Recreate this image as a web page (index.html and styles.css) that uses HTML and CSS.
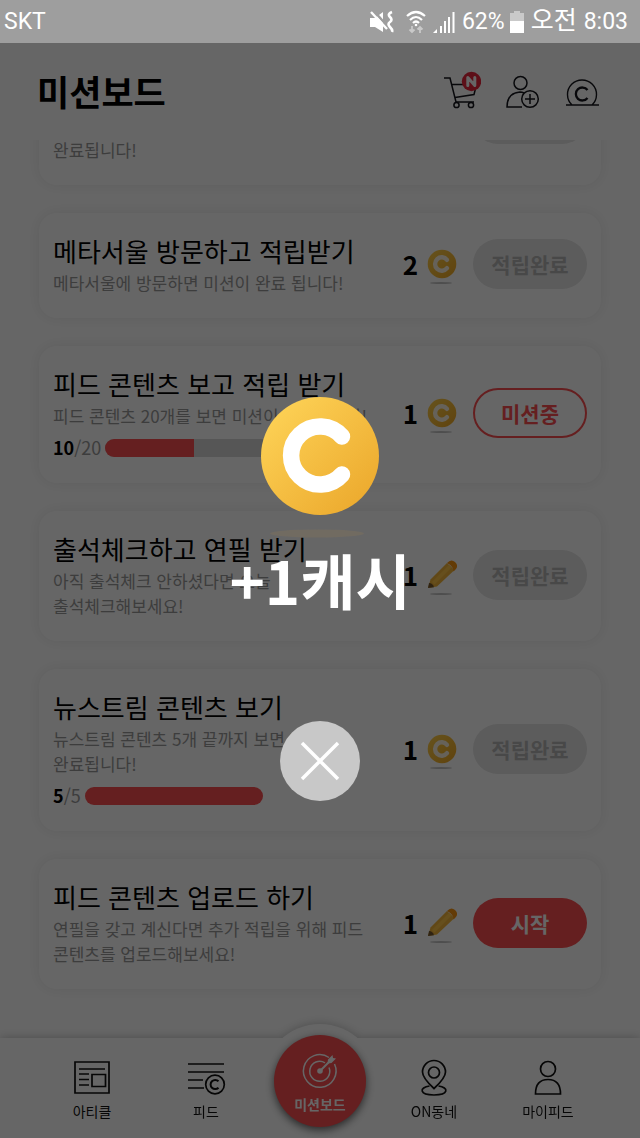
FILE: index.html
```html
<!DOCTYPE html>
<html lang="ko">
<head>
<meta charset="utf-8">
<meta name="viewport" content="width=device-width, initial-scale=1">
<title>미션보드</title>
<link rel="stylesheet" href="styles.css">
</head>
<body>
<svg class="defs" aria-hidden="true">
  <defs>
    <linearGradient id="gold" x1="0" y1="0" x2="1" y2="1">
      <stop offset="0" stop-color="#ffd65a"/>
      <stop offset="1" stop-color="#eaa529"/>
    </linearGradient>
    <linearGradient id="gold-small" x1="0" y1="0" x2="1" y2="1">
      <stop offset="0" stop-color="#ffcf4a"/>
      <stop offset="1" stop-color="#f0a824"/>
    </linearGradient>
    <symbol id="coin" viewBox="0 0 30 36">
      <circle cx="15" cy="15" r="14.300" fill="url(#gold-small)"/>
      <path d="M20 10.800a6.700 6.700 0 1 0 0 8.400" fill="none" stroke="#fff" stroke-opacity=".85" stroke-width="4.400" stroke-linecap="round"/>
      <ellipse cx="14" cy="34" rx="11" ry="1" fill="#c4c4c4"/>
    </symbol>
    <symbol id="pencil" viewBox="0 0 30 36">
      <path d="M1 28l2.500-8.500L20 3l7.500 7L10 26.500z" fill="#f2b53a"/>
      <path d="M5 22L22 5l2.500 2.500L7.500 24.500z" fill="#ffc54a"/>
      <path d="M20 3q4-4.500 8-1t.5 7.500l-2 2q0-5-6.500-8.500z" fill="#f79410"/>
      <path d="M1 28l1-5q3.500 0 5 4.200z" fill="#75582d"/>
      <ellipse cx="14" cy="34" rx="11" ry="1" fill="#c4c4c4"/>
    </symbol>
  </defs>
</svg>

<div class="statusbar">
  <span class="carrier">SKT</span>
  <svg class="status-mute" viewBox="0 0 24 24" aria-hidden="true">
    <path d="M0 8h5l8-6v20l-8-5H0z" fill="#fff"/>
    <path d="M3 0l16 18" stroke="#9e9e9e" stroke-width="2.500"/>
    <path d="M1 2l16 17" stroke="#fff" stroke-width="2.400"/>
    <path d="M22 2q-5 2-2 5t0 5 0 5 2 5" fill="none" stroke="#fff" stroke-width="2.600"/>
  </svg>
  <svg class="status-wifi" viewBox="0 0 20 24" aria-hidden="true">
    <path d="M1 6q9-8 18 0M4 10q6-6 12 0M7 13q3-3 6 0" fill="none" stroke="#fff" stroke-width="2.200"/>
    <circle cx="10" cy="15" r="1.300" fill="#fff"/>
    <path d="M6 16v6M3.500 19.500L6 22l2.500-2.500M14 23v-6M11.500 19.500L14 17l2.500 2.500" fill="none" stroke="#c9c9c9" stroke-width="1.800"/>
  </svg>
  <svg class="status-signal" viewBox="0 0 22 24" aria-hidden="true">
    <path d="M0 23l4-4v4zM7 16h2v7H7zM11 11h2v12h-2zM15 7h2v16h-2zM19.500 2h2v21h-2z" fill="#fff"/>
  </svg>
  <span class="status-text">62%</span>
  <svg class="status-battery" viewBox="0 0 14 24" aria-hidden="true">
    <path d="M4 1h6v2h4v9H0V3h4z" fill="#c9c9c9"/>
    <path d="M0 11h14v12H0z" fill="#fff"/>
  </svg>
  <span class="status-ampm">오전</span>
  <span class="status-text">8:03</span>
</div>

<div class="app">
  <header class="header">
    <h1 class="title">미션보드</h1>
    <div class="tools">
      <button class="tool" aria-label="장바구니">
        <svg viewBox="0 0 38 38" aria-hidden="true">
          <g fill="none" stroke="#15161c" stroke-width="1.500">
            <path d="M1 7h6l6 24h18M8.500 13.500h25L31 23.500l-19 3"/>
            <circle cx="13.500" cy="34" r="2.600"/><circle cx="28" cy="34" r="2.600"/>
          </g>
          <circle cx="28.500" cy="10.500" r="9.700" fill="#e8263c"/>
          <path d="M24.800 14.500v-8l7 8v-8" fill="none" stroke="#fff" stroke-width="3" stroke-linejoin="round" stroke-linecap="round"/>
        </svg>
      </button>
      <button class="tool" aria-label="친구 추가">
        <svg viewBox="0 0 38 38" aria-hidden="true">
          <g fill="none" stroke="#15161c" stroke-width="1.500">
            <circle cx="17.500" cy="12" r="6.500"/>
            <path d="M19 36H4q0-14 13-15 2 0 4 1"/>
            <circle cx="27" cy="28" r="8.300"/>
            <path d="M22 28h10M27 23v10"/>
          </g>
        </svg>
      </button>
      <button class="tool" aria-label="내 캐시">
        <svg viewBox="0 0 38 38" aria-hidden="true">
          <g fill="none" stroke="#15161c">
            <path d="M9 34a14.500 14.500 0 1 1 20 0M3 34h33" stroke-width="1.400"/>
            <path d="M24.500 19a6.500 6.500 0 1 0 0 8" stroke-width="2.300"/>
          </g>
        </svg>
      </button>
    </div>
  </header>

  <main class="missions">
    <article class="card card-tall">
      <div class="info"><p class="desc">완료됩니다!</p></div>
      <button class="action action-done" aria-label="적립완료" disabled></button>
    </article>

    <article class="card">
      <div class="info">
        <h2 class="name">메타서울 방문하고 적립받기</h2>
        <p class="desc">메타서울에 방문하면 미션이 완료 됩니다!</p>
      </div>
      <div class="reward">2<svg class="reward-icon" aria-hidden="true"><use href="#coin"/></svg></div>
      <button class="action action-done" disabled>적립완료</button>
    </article>

    <article class="card">
      <div class="info">
        <h2 class="name">피드 콘텐츠 보고 적립 받기</h2>
        <p class="desc">피드 콘텐츠 20개를 보면 미션이 완료됩니다!</p>
        <div class="progress">
          <span class="count"><b>10</b>/20</span>
          <div class="track"><div class="fill" style="width:50%"></div></div>
        </div>
      </div>
      <div class="reward">1<svg class="reward-icon" aria-hidden="true"><use href="#coin"/></svg></div>
      <button class="action action-doing">미션중</button>
    </article>

    <article class="card">
      <div class="info">
        <h2 class="name">출석체크하고 연필 받기</h2>
        <p class="desc">아직 출석체크 안하셨다면 오늘 출석체크해보세요!</p>
      </div>
      <div class="reward">1<svg class="reward-icon" aria-hidden="true"><use href="#pencil"/></svg></div>
      <button class="action action-done" disabled>적립완료</button>
    </article>

    <article class="card">
      <div class="info">
        <h2 class="name">뉴스트림 콘텐츠 보기</h2>
        <p class="desc">뉴스트림 콘텐츠 5개 끝까지 보면 미션이 완료됩니다!</p>
        <div class="progress">
          <span class="count"><b>5</b>/5</span>
          <div class="track"><div class="fill" style="width:100%"></div></div>
        </div>
      </div>
      <div class="reward">1<svg class="reward-icon" aria-hidden="true"><use href="#coin"/></svg></div>
      <button class="action action-done" disabled>적립완료</button>
    </article>

    <article class="card">
      <div class="info">
        <h2 class="name">피드 콘텐츠 업로드 하기</h2>
        <p class="desc">연필을 갖고 계신다면 추가 적립을 위해 피드 콘텐츠를 업로드해보세요!</p>
      </div>
      <div class="reward">1<svg class="reward-icon" aria-hidden="true"><use href="#pencil"/></svg></div>
      <button class="action action-start">시작</button>
    </article>
  </main>

  <nav class="tabs">
    <a class="tab" href="#article">
      <svg viewBox="0 0 40 40" aria-hidden="true"><g fill="none" stroke="#111" stroke-width="1.700">
        <path d="M3 5h34v31H3zM7 12h26M7 17h10M7 22.500h10M7 28h10M20 17.500h13.500v12H20z"/></g></svg>
      <span>아티클</span>
    </a>
    <a class="tab" href="#feed">
      <svg viewBox="0 0 40 40" aria-hidden="true"><g fill="none" stroke="#111" stroke-width="1.700">
        <path d="M2 7h36M2 15h36M2 23h15M2 31h16"/><circle cx="29" cy="27.500" r="9.300"/>
        <path d="M32.500 24.300a4.600 4.600 0 1 0 0 6.400" stroke-width="2"/></g></svg>
      <span>피드</span>
    </a>
    <div class="tab-center">
      <a class="tab-main" href="#mission" aria-current="page">
        <svg viewBox="0 0 40 40" aria-hidden="true"><g fill="none" stroke="#fff" stroke-width="1.500">
          <path d="M29 6.500A16.300 16.300 0 1 0 34.500 13"/>
          <path d="M25 11.800A10 10 0 1 0 29 16.500"/>
          <path d="M20 20L30 10" stroke-width="2"/></g>
          <circle cx="20" cy="20" r="2.800" fill="#fff"/>
          <path d="M27.500 12.500l.5-4 4.500-4.500.5 3 3 .5-4.500 4.500z" fill="#fff"/></svg>
        <span>미션보드</span>
      </a>
    </div>
    <a class="tab" href="#town">
      <svg viewBox="0 0 40 40" aria-hidden="true"><g fill="none" stroke="#111" stroke-width="1.700">
        <path d="M20 31.500Q8.500 21 8.500 15a11.500 11.500 0 0 1 23 0q0 6-11.500 16.500z"/><circle cx="20" cy="15.500" r="5.500"/>
        <path d="M15.500 29C5 30.500 5 38 20 38s15-7.500 4.500-9"/></g></svg>
      <span>ON동네</span>
    </a>
    <a class="tab" href="#my">
      <svg viewBox="0 0 40 40" aria-hidden="true"><g fill="none" stroke="#111" stroke-width="1.700">
        <circle cx="20" cy="12" r="7.500"/><path d="M7.500 37q0-14.500 12.500-14.500T32.500 37z"/></g></svg>
      <span>마이피드</span>
    </a>
  </nav>

  <div class="overlay" role="dialog" aria-label="캐시 적립">
    <svg class="big-coin" viewBox="0 0 118 146" aria-hidden="true">
      <circle cx="59" cy="59" r="59" fill="url(#gold)"/>
      <path d="M81 39.500a29 29 0 1 0 0 38" fill="none" stroke="#fff" stroke-width="16.500" stroke-linecap="round"/>
      <ellipse cx="56" cy="136.500" rx="47" ry="4" fill="#f3a92b" fill-opacity=".08"/>
    </svg>
    <p class="gain">+1캐시</p>
    <button class="close" aria-label="닫기">
      <svg viewBox="0 0 80 80" aria-hidden="true"><path d="M22 22l36 36M58 22L22 58" stroke="#fff" stroke-width="3.500"/></svg>
    </button>
  </div>
</div>
</body>
</html>
```
FILE: styles.css
```css
* {
  box-sizing: border-box;
}

body {
  margin: 0;
  height: 100vh;
  display: flex;
  flex-direction: column;
  background: #fff;
  color: #000;
  font-family: "Noto Sans CJK KR", sans-serif;
}

h1, h2, p {
  margin: 0;
}

button {
  font-family: inherit;
  border: 0;
  padding: 0;
  background: none;
}

.defs {
  position: absolute;
  width: 0;
  height: 0;
}

/* Status bar */
.statusbar {
  flex: none;
  display: flex;
  align-items: center;
  height: 43px;
  padding: 0 12px 0 4px;
  background: #9e9e9e;
  color: #fff;
  font-family: Roboto, "Noto Sans CJK KR", sans-serif;
  font-size: 23px;
}

.carrier {
  margin-right: auto;
}

.status-mute {
  width: 24px;
  height: 24px;
  margin-right: 12px;
}

.status-wifi {
  width: 20px;
  height: 24px;
  margin-right: 7px;
}

.status-signal {
  width: 22px;
  height: 24px;
  margin-right: 7px;
}

.status-battery {
  width: 14px;
  height: 24px;
  margin: 0 7px 0 5px;
}

.status-ampm {
  font-size: 25px;
  line-height: 32px;
  margin-right: 7px;
  padding-bottom: 2px;
}

/* Page */
.app {
  position: relative;
  flex: 1;
  min-height: 0;
  display: flex;
  flex-direction: column;
}

.header {
  flex: none;
  display: flex;
  align-items: center;
  justify-content: space-between;
  height: 97px;
  padding: 0 39px 2px 37px;
}

.title {
  font-size: 35px;
  line-height: 52px;
  font-weight: 700;
}

.tools {
  display: flex;
  gap: 22px;
  padding-bottom: 2px;
}

.tool, .tool svg {
  display: block;
  width: 38px;
  height: 38px;
}

.missions {
  flex: 1;
  min-height: 0;
  overflow: hidden;
  display: flex;
  flex-direction: column;
  justify-content: flex-end;
  gap: 28px;
  padding: 0 39px 49px;
}

.card {
  flex: none;
  display: flex;
  align-items: center;
  padding: 20px 14px 23px 14px;
  border-radius: 18px;
  background: #fff;
  box-shadow: 0 0 14px rgba(0, 0, 0, 0.08);
}

.card-tall {
  height: 130px;
}

.card-tall .info {
  align-self: flex-end;
}

.info {
  flex: 1;
  min-width: 0;
}

.name {
  margin-bottom: 1px;
  font-size: 26px;
  line-height: 36px;
  font-weight: 400;
}

.desc {
  max-width: 324px;
  color: #999;
  font-size: 17px;
  line-height: 25px;
  word-break: keep-all;
}

.progress {
  display: flex;
  align-items: center;
  gap: 4px;
  margin-top: 7px;
}

.count {
  color: #999;
  font-size: 18px;
  line-height: 25px;
}

.count b {
  color: #000;
}

.track {
  width: 178px;
  height: 18px;
  border-radius: 9px;
  overflow: hidden;
  background: #d8d8d8;
}

.fill {
  height: 100%;
  background: #fc4e50;
}

.reward {
  display: flex;
  align-items: center;
  gap: 9px;
  margin-right: 16px;
  font-size: 26px;
  line-height: 36px;
  font-weight: 700;
}

.reward-icon {
  width: 30px;
  height: 36px;
  margin-top: 6px;
}

.action {
  width: 114px;
  height: 50px;
  border-radius: 25px;
  font-size: 21px;
  font-weight: 700;
}

.action-done {
  background: #e6e6e6;
  color: #b4b4b4;
}

.action-doing {
  border: 2px solid #fc4e50;
  color: #fc4e50;
}

.action-start {
  background: #fc4e50;
  color: #fff;
}

/* Bottom tabs */
.tabs {
  flex: none;
  display: flex;
  height: 100px;
  padding: 0 35px;
  background: #fff;
  filter: drop-shadow(0 0 5px rgba(0, 0, 0, 0.25));
}

.tab, .tab-center {
  flex: 1;
  display: flex;
  flex-direction: column;
  align-items: center;
}

.tab {
  padding-top: 19px;
  gap: 4px;
  color: #111;
  font-size: 14px;
  line-height: 20px;
  text-decoration: none;
}

.tab svg {
  width: 40px;
  height: 40px;
}

.tab-center {
  margin-top: -14px;
  height: 114px;
  padding-top: 11px;
  border-radius: 50%;
  background: #fff;
}

.tab-main {
  display: flex;
  flex-direction: column;
  align-items: center;
  width: 92px;
  height: 92px;
  padding-top: 16px;
  border-radius: 50%;
  background: #fc4e50;
  box-shadow: 0 3px 8px rgba(0, 0, 0, 0.6);
  color: #fff;
  font-size: 14px;
  line-height: 20px;
  font-weight: 700;
  text-decoration: none;
}

.tab-main svg {
  width: 40px;
  height: 40px;
  margin-bottom: 3px;
}

/* Reward popup, drawn over the page */
.overlay {
  position: absolute;
  inset: 0;
  display: flex;
  flex-direction: column;
  align-items: center;
  justify-content: center;
  padding-top: 17px;
  background: rgba(0, 0, 0, 0.6);
}

.big-coin {
  width: 118px;
  height: 146px;
}

.gain {
  margin-bottom: 106px;
  color: #fff;
  font-size: 60px;
  line-height: 72px;
  font-weight: 700;
}

.close {
  width: 80px;
  height: 80px;
  border-radius: 50%;
  background: #c8c8c8;
}

.close svg {
  display: block;
  width: 80px;
  height: 80px;
}
```
